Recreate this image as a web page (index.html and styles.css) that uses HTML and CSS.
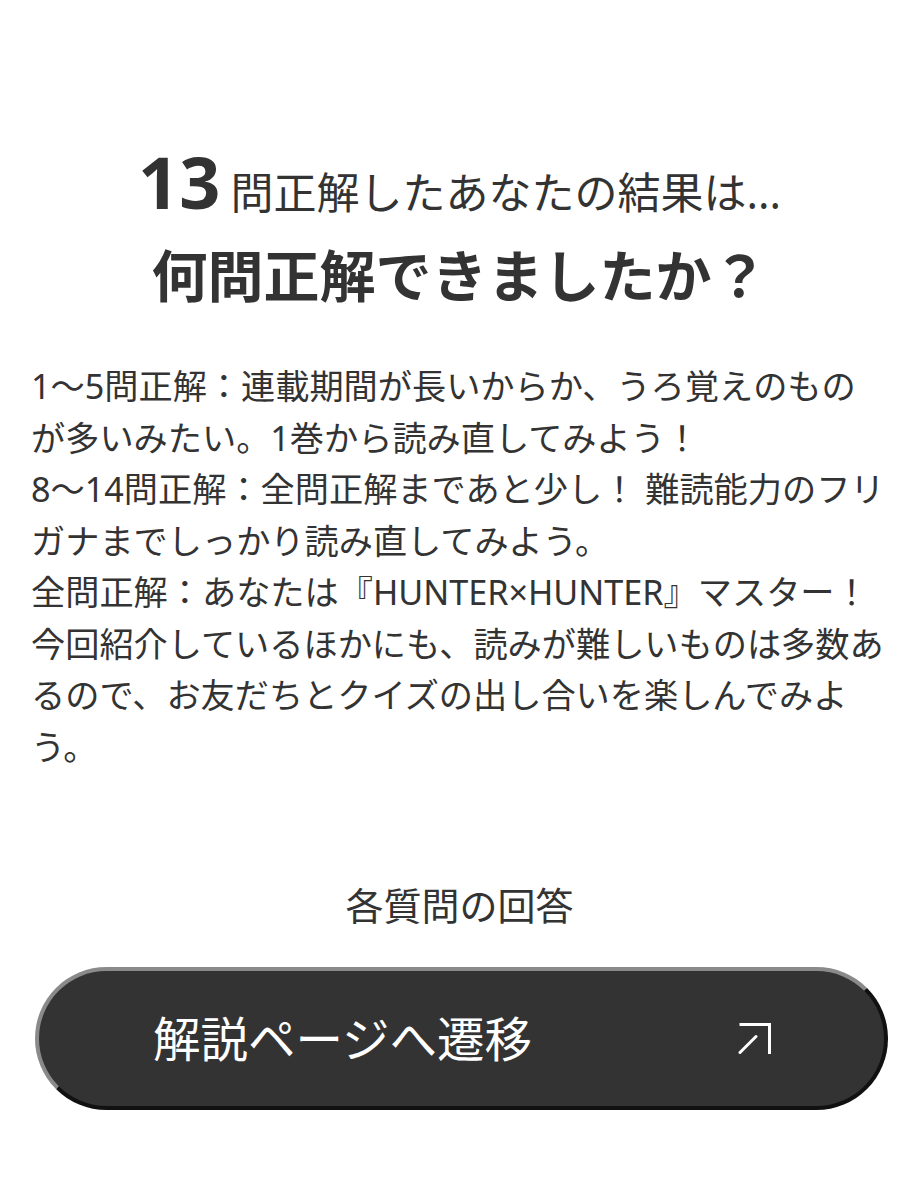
FILE: index.html
```html
<!DOCTYPE html>
<html lang="ja">
<head>
<meta charset="utf-8">
<title>結果</title>
<link rel="stylesheet" href="styles.css">
</head>
<body>
<main class="result">
  <p class="result-score"><span class="score-num">13</span><span class="score-text">問正解したあなたの結果は...</span></p>
  <h1 class="result-heading">何問正解できましたか？</h1>
  <p class="result-desc">1〜5問正解：連載期間が長いからか、うろ覚えのものが多いみたい。1巻から読み直してみよう！<br>8〜14問正解：全問正解まであと少し！ 難読能力のフリガナまでしっかり読み直してみよう。<br>全問正解：あなたは『HUNTER×HUNTER』マスター！<br>今回紹介しているほかにも、読みが難しいものは多数あるので、お友だちとクイズの出し合いを楽しんでみよう。</p>
  <p class="answers-label">各質問の回答</p>
  <a class="answers-button" href="#">
    <span class="button-text">解説ページへ遷移</span>
    <svg class="button-icon" width="34" height="34" viewBox="0 0 34 34" aria-hidden="true">
      <path d="M1.5 2.5 H31.5 V32" fill="none" stroke="#fff" stroke-width="3"/>
      <path d="M18 14.5 L2 30.5" fill="none" stroke="#fff" stroke-width="3" stroke-linecap="round"/>
    </svg>
  </a>
</main>
</body>
</html>
```

FILE: styles.css
```css
html, body {
  margin: 0;
  padding: 0;
  background: #fff;
}

body {
  font-family: "Noto Sans", "Noto Sans CJK JP", sans-serif;
  color: #333;
}

.result {
  padding: 136px 36px 60px 31px;
}

.result-score {
  margin: 0;
  height: 90px;
  line-height: 90px;
  text-align: center;
  white-space: nowrap;
}

.score-num {
  font-size: 72px;
  font-weight: 700;
  margin-right: 10px;
}

.score-text {
  font-size: 43px;
  font-weight: 400;
}

.result-heading {
  margin: 9px 0 0;
  font-size: 56px;
  line-height: 80px;
  font-weight: 700;
  text-align: center;
}

.result-desc {
  margin: 45px 0 0;
  font-size: 34.2px;
  line-height: 51.5px;
}

.answers-label {
  margin: 105px 0 0;
  font-size: 38px;
  line-height: 57px;
  text-align: center;
}

.answers-button {
  margin-top: 33px;
  margin-left: 4px;
  box-sizing: border-box;
  height: 143px;
  display: flex;
  align-items: center;
  justify-content: space-between;
  padding: 0 112px 0 114px;
  background: #333;
  border: 4px solid;
  border-color: #8a8a8a #111 #111 #8a8a8a;
  border-radius: 72px;
  color: #fff;
  text-decoration: none;
}

.button-text {
  font-size: 47.5px;
  line-height: 1;
}

.button-icon {
  display: block;
}
```
